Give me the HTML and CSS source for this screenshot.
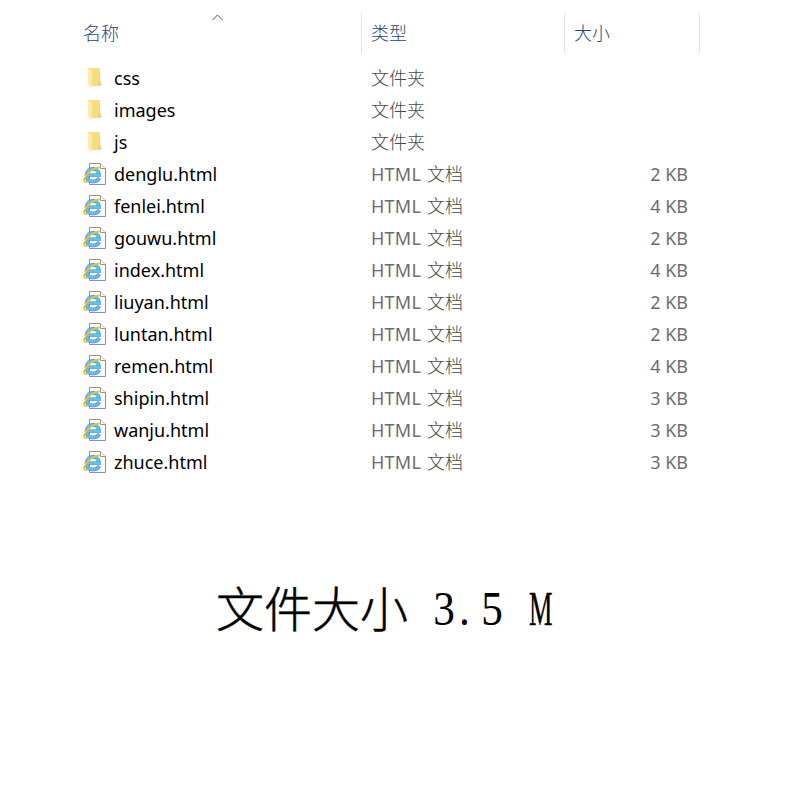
FILE: index.html
```
<!DOCTYPE html>
<html lang="zh-CN">
<head>
<meta charset="utf-8">
<title>文件大小</title>
<link rel="stylesheet" href="styles.css">
</head>
<body>
<svg class="defs" aria-hidden="true">
<symbol id="folder" viewBox="0 0 24 24"><path fill="#f9dc82" d="M5 2h12v13l1 1v4H8z"/><path fill="#ffebb0" d="M5 2l4 3v15l-1 2-3-3z"/><path fill="#f2d177" d="M15 15h2l1 1v4h-3z"/></symbol>
<symbol id="html" viewBox="0 0 24 24"><path fill="#fbfbfb" stroke="#929292" d="M6.500 1.500h11l5 5v16h-16z"/><path fill="#fff" stroke="#929292" d="M17.500 1.500v5h5"/><path fill="none" stroke="#3b93c9" stroke-width="3.600" d="M5 13h11c0-8.700-12.500-7.700-12.500.5 0 7.500 10.500 7.500 12.700 2.500"/><path fill="none" stroke="#65bdeb" stroke-width="2.400" d="M5 13h11c0-8.700-12.500-7.700-12.500.5 0 7.500 10.500 7.500 12.700 2.500"/><path fill="#fff" d="M6.800 11.300c.8-2.600 5.700-2.600 6.400 0z"/><path fill="none" stroke="#f2c52d" stroke-width="1.700" d="M4 20c-5 1-3-5 2-9.500 4-3.800 9-5.800 11.500-4.800"/></symbol>
</svg>
<main class="explorer">
<header class="row head"><div class="name">名称<svg class="sort" viewBox="0 0 12 7"><path d="M1 6l5-5 5 5"/></svg></div><div class="type">类型</div><div class="size">大小</div></header>
<ul class="files" id="files"></ul>
</main>
<p class="total"><span class="label">文件大小</span><span class="value"><span>3</span><span class="dot">.</span><span>5</span></span><span class="unit">M</span></p>
<script src="script.js"></script>
</body>
</html>
```
FILE: styles.css
```
body{margin:0;height:800px;background:#fff;font-family:"Noto Sans","Noto Sans CJK SC",sans-serif;font-size:18px;overflow:hidden}
.defs{position:absolute;width:0;height:0}
.explorer{margin-left:83px;width:617px;padding-top:13px}
.row{display:grid;grid-template-columns:279px 203px 135px}
.head{height:40px;line-height:40px;color:#2c4570;font-weight:300}
.head>div{box-sizing:border-box;border-right:1px solid #e2e2e2;position:relative}
.head .type,.head .size{padding-left:9px}
.sort{position:absolute;left:128px;top:1px;width:13px;height:7px;fill:none;stroke:#555}
.files{list-style:none;margin:9px 0 0;padding:0}
.files .row{height:32px;line-height:32px;color:#6d6d6d}
.files .name{display:flex;align-items:center;gap:7px;color:#000}
.files .type{padding-left:9px}
.kind{font-weight:300;color:#484848}
.ext{letter-spacing:.25px;margin-right:6px}
.files .size{text-align:right;padding-right:12px}
.icon{width:24px;height:24px}
.total{display:flex;margin:95px 0 0 216px;font:300 48px/72px "Noto Sans CJK SC",sans-serif}
.label{margin-top:-3px;-webkit-text-stroke:.5px #000}
.value{display:flex;margin-left:24px}
.value,.unit{font-family:"Liberation Serif",serif}
.value span{width:24px;transform:scaleX(.9)}
.value .dot{text-indent:2px}
.unit{margin-left:25px;transform:scaleX(.55);transform-origin:left;-webkit-text-stroke:.4px #000}
```
FILE: script.js
```
const files = [["css"],["images"],["js"],["denglu.html",2],["fenlei.html",4],["gouwu.html",2],["index.html",4],["liuyan.html",2],["luntan.html",2],["remen.html",4],["shipin.html",3],["wanju.html",3],["zhuce.html",3]];
document.getElementById("files").innerHTML = files.map(([name,kb]) => `<li class="row"><div class="name"><svg class="icon"><use href="#${kb ? "html" : "folder"}"/></svg><span>${name}</span></div><div class="type">${kb ? '<span class="ext">HTML</span><span class="kind">文档</span>' : '<span class="kind">文件夹</span>'}</div><div class="size">${kb ? kb + " KB" : ""}</div></li>`).join("");
```
